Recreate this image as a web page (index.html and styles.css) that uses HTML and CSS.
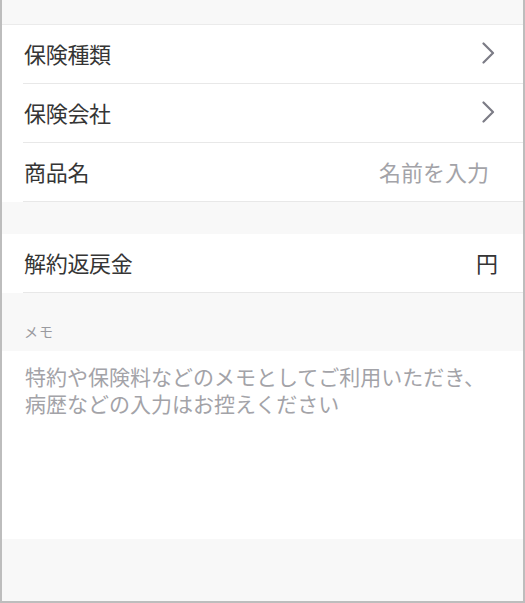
FILE: index.html
```html
<!DOCTYPE html>
<html lang="ja">
<head>
    <meta charset="UTF-8">
    <meta name="viewport" content="width=device-width, initial-scale=1.0">
    <title>保険登録</title>
    <link rel="stylesheet" href="styles.css">
</head>
<body>
    <div class="frame">
        <div class="top-gap"></div>

        <section class="group group-first">
            <div class="row">
                <span class="label">保険種類</span>
                <svg class="chevron" width="14" height="22" viewBox="0 0 14 22">
                    <path d="M2.5 1.5 L12 11 L2.5 20.5" fill="none" stroke="#7c7c86" stroke-width="2.2" stroke-linecap="round" stroke-linejoin="round"/>
                </svg>
            </div>
            <div class="row">
                <span class="label">保険会社</span>
                <svg class="chevron" width="14" height="22" viewBox="0 0 14 22">
                    <path d="M2.5 1.5 L12 11 L2.5 20.5" fill="none" stroke="#7c7c86" stroke-width="2.2" stroke-linecap="round" stroke-linejoin="round"/>
                </svg>
            </div>
            <div class="row">
                <span class="label">商品名</span>
                <span class="placeholder">名前を入力</span>
            </div>
        </section>

        <div class="mid-gap"></div>

        <section class="group">
            <div class="row">
                <span class="label">解約返戻金</span>
                <span class="unit">円</span>
            </div>
        </section>

        <div class="memo-head">メモ</div>
        <div class="memo-body">
            <div class="memo-line">特約や保険料などのメモとしてご利用いただき、</div>
            <div class="memo-line">病歴などの入力はお控えください</div>
        </div>
    </div>
</body>
</html>
```

FILE: styles.css
```css
body {
    margin: 0;
    padding: 0;
    font-family: "Noto Sans CJK JP", "Noto Sans", sans-serif;
    background: #f8f8f8;
}

.frame {
    width: 525px;
    height: 603px;
    box-sizing: border-box;
    border-left: 2px solid #bdbdbd;
    border-right: 2px solid #bdbdbd;
    border-bottom: 2px solid #bdbdbd;
    background: #f8f8f8;
    display: flex;
    flex-direction: column;
}

.top-gap {
    height: 24px;
}

.group {
    background: #fff;
    padding-left: 21px;
}

.group-first {
    border-top: 1px solid #ebebeb;
}

.row {
    height: 59px;
    box-sizing: border-box;
    border-bottom: 1px solid #e8e8e8;
    display: flex;
    align-items: center;
    justify-content: space-between;
    padding-right: 26px;
    padding-bottom: 3px;
}

.label {
    font-size: 22px;
    color: #353535;
    letter-spacing: -0.3px;
    padding-left: 1px;
}

.placeholder {
    font-size: 22px;
    color: #a3a3a8;
    margin-right: 8px;
}

.unit {
    font-size: 22px;
    color: #353535;
    margin-right: -1px;
}

.chevron {
    display: block;
    margin-right: 2px;
}

.mid-gap {
    height: 32px;
}

.memo-head {
    height: 58px;
    box-sizing: border-box;
    padding: 28px 0 0 22px;
    font-size: 14px;
    line-height: 20px;
    color: #9a9a9f;
    letter-spacing: 1px;
}

.memo-body {
    height: 188px;
    box-sizing: border-box;
    background: #fff;
    padding: 12px 0 0 23px;
    font-size: 21px;
    color: #a3a3a8;
}

.memo-line {
    height: 27px;
    line-height: 27px;
    white-space: nowrap;
}
```
